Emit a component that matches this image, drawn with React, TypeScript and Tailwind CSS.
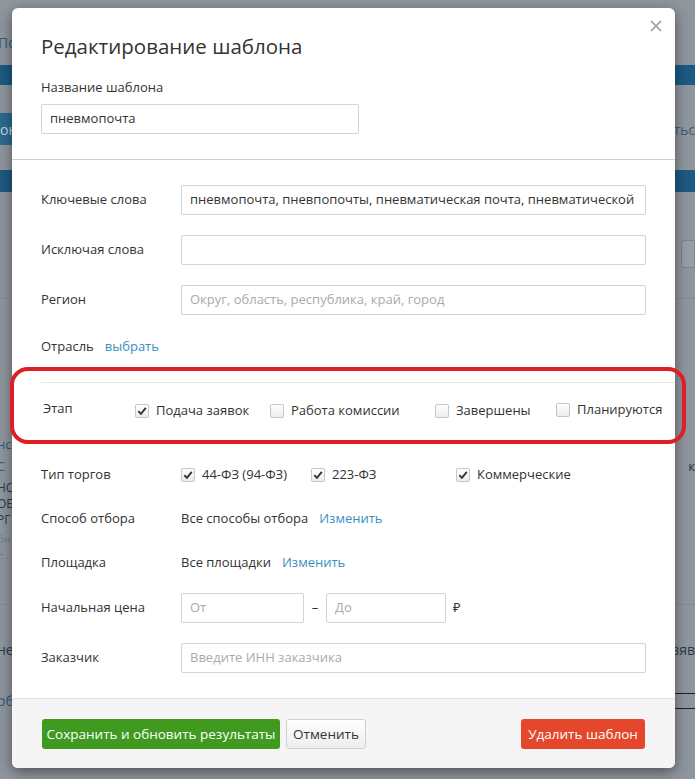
import type { ReactNode } from "react";

const font = { fontFamily: '"Open Sans", "Noto Sans", sans-serif' };

function Check({ checked, label }: { checked?: boolean; label: string }) {
  return (
    <label className="flex items-center gap-[7px] whitespace-nowrap text-[13px] text-[#333]">
      <span className="flex h-[14px] w-[14px] shrink-0 items-center justify-center rounded-[2px] border border-[#c6c6c6] bg-gradient-to-b from-white to-[#ececec]">
        {checked && (
          <svg width="10" height="10" viewBox="0 0 10 10">
            <path d="M1.3 5.2 L3.9 7.8 L8.8 1.9" fill="none" stroke="#333" strokeWidth="1.9" />
          </svg>
        )}
      </span>
      {label}
    </label>
  );
}

function Field({ value, placeholder, className = "" }: { value?: string; placeholder?: string; className?: string }) {
  return (
    <div
      className={`flex h-[30px] items-center overflow-hidden whitespace-nowrap rounded-[2px] border border-[#d4d4d4] bg-white px-[8px] text-[13px] ${className}`}
    >
      {value ? <span className="text-[#333]">{value}</span> : <span className="text-[#aaa]">{placeholder}</span>}
    </div>
  );
}

function Row({ label, children, className = "" }: { label: string; children: ReactNode; className?: string }) {
  return (
    <div className={`flex items-center ${className}`}>
      <div className="w-[140px] shrink-0 text-[13px] text-[#333]">{label}</div>
      {children}
    </div>
  );
}

function Backdrop() {
  return (
    <div className="flex h-full flex-col text-[14px] text-[#35577a]">
      <div className="h-[30px]" />
      <div className="flex h-[24px] items-center">
        <span className="-ml-[2px]">Поиск</span>
      </div>
      <div className="mt-[11px] h-[20px] bg-[#1d5a82]" />
      <div className="mt-[28px] flex h-[32px] items-center justify-between">
        <span className="flex h-full items-center bg-[#2c6a91] pr-2 text-[#c9d6e0]">он</span>
        <span className="text-[#3f5d7a]">тьс</span>
      </div>
      <div className="mt-[25px] h-[22px] bg-[#1d5a82]" />
      <div className="mt-[48px] flex h-[28px] justify-end">
        <div className="w-[14px] rounded-l-[3px] border border-[#7d848b] bg-[#979ea5]" />
      </div>
      <div className="mt-[30px] h-px bg-[#858c93]" />
      <div className="mt-[134px] flex flex-col items-start text-[13px]">
        <span className="-ml-[3px] leading-[22px]">нс</span>
        <span className="flex w-full justify-between leading-[22px]">
          <span className="-ml-[3px]">С</span>
          <span className="text-[#333]">к</span>
        </span>
        <span className="-ml-[3px] mt-[3px] text-[12px] leading-[16px] text-[#2a3a4c]">НС</span>
        <span className="-ml-[3px] text-[12px] leading-[16px] text-[#2a3a4c]">ОБ</span>
        <span className="-ml-[3px] text-[12px] leading-[16px] text-[#2a3a4c]">РГ</span>
        <span className="-ml-[3px] mt-[3px] text-[11px] leading-[16px] text-[#6c7c8c]">бн</span>
        <span className="-ml-[3px] text-[11px] leading-[16px] text-[#6c7c8c]">е ...</span>
      </div>
      <div className="mt-[22px] flex h-[20px] flex-col justify-end">
        <div className="h-px bg-[#858c93]" />
      </div>
      <div className="mt-[34px] flex justify-between">
        <span className="-ml-[3px] text-[#2a3a4c]">не</span>
        <span className="text-[#2a3a4c]">зяв</span>
      </div>
      <div className="mt-[30px] flex items-center justify-between">
        <span className="-ml-[3px]">об</span>
        <span className="h-[16px] w-[22px] border-y border-[#222]" />
      </div>
    </div>
  );
}

export default function App() {
  return (
    <div className="relative h-[779px] w-[695px] overflow-hidden bg-[#8f969d]" style={font}>
      <Backdrop />

      {/* modal */}
      <div className="absolute left-[12px] top-[8px] flex w-[663px] flex-col rounded-[6px] bg-white shadow-[0_4px_14px_rgba(0,0,0,0.45)]">
        <button className="absolute right-[11px] top-[10px] p-[2px]">
          <svg width="12" height="12" viewBox="0 0 12 12">
            <path d="M1 1 L11 11 M11 1 L1 11" stroke="#9a9a9a" strokeWidth="1.6" />
          </svg>
        </button>

        <div className="px-[29px] pb-[25px] pt-[24px]">
          <h2 className="text-[20.5px] leading-[28px] font-normal text-[#333]">Редактирование шаблона</h2>
          <div className="mt-[17px] text-[13px] leading-[20px] text-[#333]">Название шаблона</div>
          <Field value="пневмопочта" className="mt-[7px] w-[318px]" />
        </div>

        <div className="flex flex-col border-t border-[#cfcfcf] px-[29px] pt-[25px] pb-[25px]">
          <Row label="Ключевые слова">
            <Field
              value="пневмопочта, пневпопочты, пневматическая почта, пневматической"
              className="flex-1"
            />
          </Row>
          <Row label="Исключая слова" className="mt-[20px]">
            <Field className="flex-1" />
          </Row>
          <Row label="Регион" className="mt-[20px]">
            <Field placeholder="Округ, область, республика, край, город" className="flex-1" />
          </Row>
          <div className="mt-[20px] flex h-[24px] items-center gap-[11px] text-[13px]">
            <span className="text-[#333]">Отрасль</span>
            <a className="text-[#3a8ec4]">выбрать</a>
          </div>

          <div className="-mr-[29px] mt-[23px] border-t border-[#e6e6e6]" />

          <div className="mt-[16px] flex h-[24px] items-center">
            <div className="w-[94px] shrink-0 pb-[4px] pl-[2px] text-[13px] text-[#333]">Этап</div>
            <div className="w-[135px] shrink-0">
              <Check checked label="Подача заявок" />
            </div>
            <div className="w-[165px] shrink-0">
              <Check label="Работа комиссии" />
            </div>
            <div className="w-[121px] shrink-0">
              <Check label="Завершены" />
            </div>
            <div className="shrink-0 pb-[3px]">
              <Check label="Планируются" />
            </div>
          </div>

          <Row label="Тип торгов" className="mt-[40px] h-[24px]">
            <div className="w-[130px] shrink-0">
              <Check checked label="44-ФЗ (94-ФЗ)" />
            </div>
            <div className="w-[145px] shrink-0">
              <Check checked label="223-ФЗ" />
            </div>
            <Check checked label="Коммерческие" />
          </Row>

          <Row label="Способ отбора" className="mt-[20px] h-[24px]">
            <span className="text-[13px] text-[#333]">Все способы отбора</span>
            <a className="ml-[11px] text-[13px] text-[#3a8ec4]">Изменить</a>
          </Row>

          <Row label="Площадка" className="mt-[20px] h-[24px]">
            <span className="text-[13px] text-[#333]">Все площадки</span>
            <a className="ml-[11px] text-[13px] text-[#3a8ec4]">Изменить</a>
          </Row>

          <Row label="Начальная цена" className="mt-[18px]">
            <Field placeholder="От" className="w-[123px]" />
            <span className="w-[22px] text-center text-[13px] text-[#333]">–</span>
            <Field placeholder="До" className="w-[120px]" />
            <span className="ml-[7px] text-[13px] text-[#333]">₽</span>
          </Row>

          <Row label="Заказчик" className="mt-[20px]">
            <Field placeholder="Введите ИНН заказчика" className="flex-1" />
          </Row>
        </div>

        <div className="flex items-center rounded-b-[6px] border-t border-[#e2e2e2] bg-[#f5f5f5] pb-[19px] pl-[30px] pr-[30px] pt-[20px]">
          <button className="h-[30px] w-[238px] rounded-[3px] bg-[#3f9a1f] text-[13.5px] text-white">
            Сохранить и обновить результаты
          </button>
          <button className="ml-[6px] h-[30px] w-[80px] rounded-[3px] border border-[#cfcfcf] bg-gradient-to-b from-white to-[#ededed] text-[13.5px] text-[#333]">
            Отменить
          </button>
          <button className="ml-auto h-[30px] w-[124px] rounded-[3px] bg-[#e4472b] text-[13.5px] text-white">
            Удалить шаблон
          </button>
        </div>
      </div>

      {/* annotation */}
      <div className="pointer-events-none absolute left-[10px] top-[367px] h-[77px] w-[676px] rounded-[18px] border-[4px] border-[#dd1f26]" />
    </div>
  );
}
